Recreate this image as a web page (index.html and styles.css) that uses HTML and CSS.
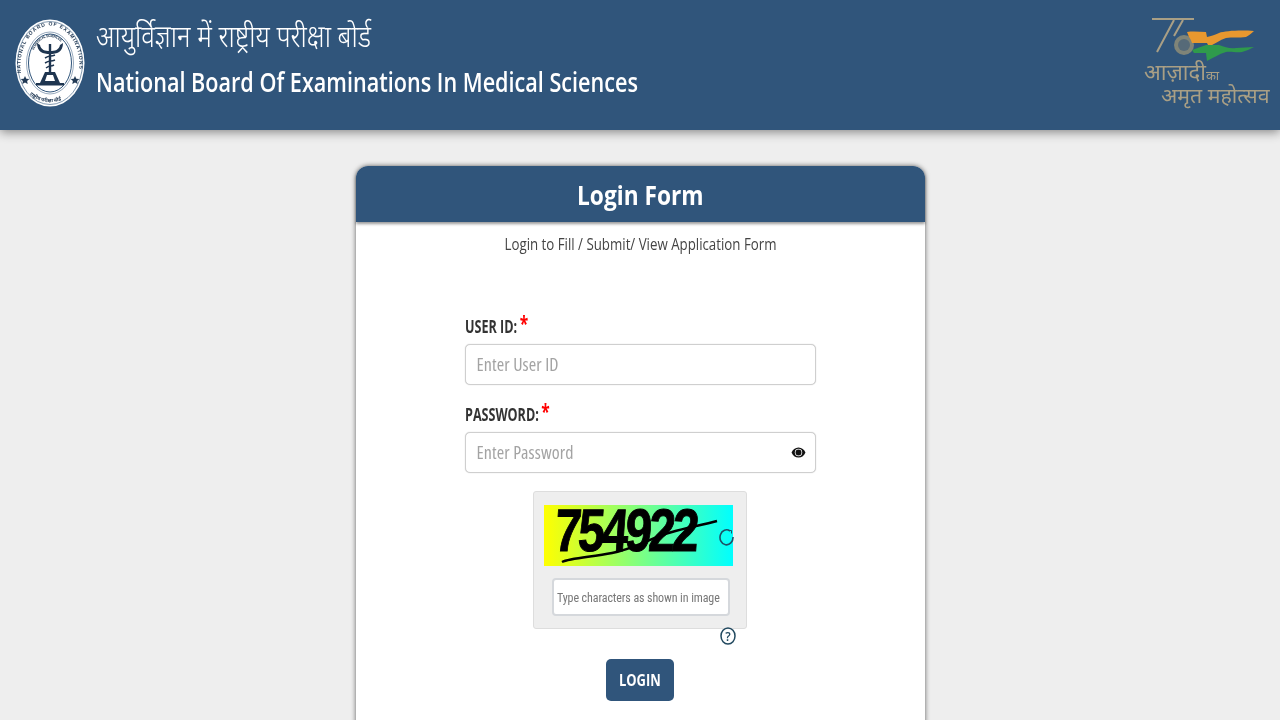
FILE: index.html
```html
<!DOCTYPE html>
<html lang="en">
<head>
<meta charset="utf-8">
<title>Login Form</title>
<link rel="stylesheet" href="styles.css">
</head>
<body>
<header class="topbar">
  <div class="brand">
    <svg class="seal" viewBox="0 0 70 90" width="70" height="90" aria-hidden="true">
      <defs>
        <path id="sealArc" d="M6 56 A29.500 40 0 1 1 64 56"/>
        <path id="sealSub" d="M19 33 A18 24 0 0 1 51 33"/>
        <path id="sealLow" d="M14 77 A28 24 0 0 0 56 77"/>
      </defs>
      <ellipse cx="35" cy="46" rx="34.500" ry="43.500" fill="#fff"/>
      <ellipse cx="35" cy="46" rx="32.500" ry="41.500" fill="none" stroke="#30557b" stroke-width=".6"/>
      <ellipse cx="35" cy="46" rx="21.500" ry="29" fill="none" stroke="#30557b" stroke-width="1"/>
      <ellipse cx="35" cy="46" rx="23.500" ry="31" fill="none" stroke="#30557b" stroke-width=".5"/>
      <text class="seal-text"><textPath href="#sealArc" textLength="120">NATIONAL BOARD OF EXAMINATIONS</textPath></text>
      <text class="seal-sub"><textPath href="#sealSub" textLength="34">IN MEDICAL SCIENCES</textPath></text>
      <text class="seal-hi"><textPath href="#sealLow" startOffset="1">राष्ट्रीय परीक्षा बोर्ड</textPath></text>
      <path d="M10 59l1.300 2.700 3 .4-2.200 2 .6 3-2.700-1.500-2.700 1.500.6-3-2.200-2 3-.4z M60 59l1.300 2.700 3 .4-2.200 2 .6 3-2.700-1.500-2.700 1.500.6-3-2.200-2 3-.4z" fill="#223a55"/>
      <path d="M22 26c0 9 6 11 13 11s13-2 13-11l-3 2c-1 5-5 6-10 6s-9-1-10-6z" fill="#1e3550"/>
      <path d="M33.800 27h2.400v30h-2.400z" fill="#1e3550"/>
      <path d="M30 41c5-3 5-1 10-3M30 46c5-3 5-1 10-3M31 51c4-3 4-1 8-3" stroke="#1e3550" stroke-width="1.500" fill="none"/>
      <path d="M25 66l5-11h10l5 11z" fill="#1e3550"/>
      <path d="M32 58h6l2 6h-10z" fill="#fff"/>
      <path d="M21 66h28v2.500H21z" fill="#1e3550"/>
    </svg>
    <div class="brand-text">
      <div class="title-hi">आयुर्विज्ञान में राष्ट्रीय परीक्षा बोर्ड</div>
      <div class="title-en">National Board Of Examinations In Medical Sciences</div>
    </div>
  </div>
  <div class="azadi">
    <svg class="azadi-mark" viewBox="0 0 112 46" width="112" height="46" aria-hidden="true">
      <path d="M8 3h42" stroke="#a99f85" stroke-width="2" fill="none"/>
      <path d="M30 4 13 36 M39 4 30 20" stroke="#a99f85" stroke-width="2" fill="none"/>
      <circle cx="40" cy="29" r="10" fill="#7f8478"/>
      <circle cx="40" cy="29" r="6" fill="#566a78"/>
      <path d="M43 16C50 15 56 16 62 16L63 21C69 20 72 18 75 17 81 15 95 14 110 15 107 18 104 20 102 21 95 22 88 21 82 22 76 24 70 28 65 31L63 27 48 27C47 24 46 22 45 21z" fill="#e8982f"/>
      <path d="M48 34 62 29 75 29C81 31 86 33 92 32 98 32 104 31 110 31 106 33 102 35 98 36 92 37 87 35 82 36 75 38 69 42 63 45L62 37 50 37z" fill="#2f9a4c"/>
    </svg>
    <div class="azadi-line one">आज़ादी<span class="azadi-small">का</span></div>
    <div class="azadi-line two">अमृत महोत्सव</div>
  </div>
</header>

<main class="page">
  <section class="card">
    <h1 class="card-title"><span class="card-title-text">Login Form</span></h1>
    <p class="card-sub">Login to Fill / Submit/ View Application Form</p>
    <form class="form">
      <label class="label">USER ID: <span class="req">*</span></label>
      <div class="field"><input class="input" type="text" placeholder="Enter User ID"></div>
      <label class="label second">PASSWORD: <span class="req">*</span></label>
      <div class="field">
        <input class="input" type="password" placeholder="Enter Password">
        <svg class="eye" viewBox="0 0 16 14" width="15" height="13" aria-hidden="true">
          <path d="M8 1.500C4.500 1.500 1.700 3.800.5 7c1.200 3.200 4 5.500 7.500 5.500s6.300-2.300 7.500-5.500C14.300 3.800 11.500 1.500 8 1.500z" fill="#111"/>
          <circle cx="8" cy="7" r="4" fill="#fff"/>
          <circle cx="8" cy="7" r="3.200" fill="#111"/>
        </svg>
      </div>
      <div class="captcha-wrap">
        <div class="captcha">
          <div class="captcha-image">
            <span class="captcha-code">754922</span>
            <svg class="captcha-strike" viewBox="0 0 190 61" width="190" height="61" aria-hidden="true">
              <path d="M18 57c8-4 30-5 50-9 22-4 38-15 60-21 14-4 30-7 45-11" stroke="#000" stroke-width="2.500" fill="none"/>
            </svg>
            <svg class="captcha-reload" viewBox="0 0 16 18" width="16" height="18" aria-hidden="true">
              <path d="M11 3A6.500 7.500 0 1 0 14 9" stroke="#1f4f66" stroke-width="1.600" fill="none"/>
              <path d="M9.500 2.500 12.500 2.500 12.500 5.500" stroke="#1f4f66" stroke-width="1" fill="none"/>
            </svg>
          </div>
          <input class="captcha-input" type="text" placeholder="Type characters as shown in image">
        </div>
        <svg class="help" viewBox="0 0 16 18" width="16" height="18" aria-hidden="true">
          <ellipse cx="8" cy="9" rx="7" ry="8" fill="none" stroke="#234a60" stroke-width="1.500"/>
          <text x="8" y="13.500" class="help-text">?</text>
        </svg>
      </div>
      <div class="actions"><button class="login" type="button"><span class="login-text">LOGIN</span></button></div>
    </form>
  </section>
</main>
</body>
</html>
```
FILE: styles.css
```css
* { box-sizing: border-box; }
html, body { height: 100%; }
body {
  margin: 0;
  height: 720px;
  overflow: hidden;
  background: #eeeeee;
  font-family: "Open Sans", "Noto Sans", sans-serif;
  color: #333;
}
.topbar {
  height: 130px;
  background: #30557b;
  box-shadow: 0 2px 10px rgba(0, 0, 0, .45);
  display: flex;
  justify-content: space-between;
  align-items: flex-start;
  padding: 17px 10px 0 15px;
}
.brand { display: flex; gap: 11px; }
.seal { display: block; filter: blur(.4px); }
.seal-text { font-size: 5px; font-weight: 700; fill: #223a55; font-family: "Liberation Sans", sans-serif; }
.seal-sub { font-size: 3.500px; font-weight: 700; fill: #223a55; font-family: "Liberation Sans", sans-serif; }
.seal-hi { font-size: 5px; font-weight: 700; fill: #223a55; font-family: "Noto Sans", sans-serif; }
.brand-text { color: #fff; filter: blur(.3px); }
.title-hi {
  font-size: 31px;
  line-height: 36px;
  height: 36px;
  font-weight: 300;
  font-family: "Noto Sans", "DejaVu Sans", sans-serif;
  white-space: nowrap;
  transform: scaleX(.833);
  transform-origin: left;
}
.title-en {
  font-size: 27px;
  line-height: 36px;
  margin-top: 11px;
  font-weight: 600;
  white-space: nowrap;
  transform: scaleX(.8);
  transform-origin: left;
}
.azadi { width: 126px; margin-top: -1px; display: flex; flex-direction: column; filter: blur(.5px); }
.azadi-mark { display: block; }
.azadi-line { color: #a99f85; font-family: "Noto Sans", sans-serif; white-space: nowrap; line-height: 22px; }
.azadi-line.one { font-size: 22px; margin-top: -2px; }
.azadi-line.two { font-size: 21.300px; margin: -2px 0 0 17px; }
.azadi-small { font-size: 13px; }
.page { display: flex; justify-content: center; padding-top: 36px; }
.card {
  width: 569px;
  height: 700px;
  background: #fff;
  border-radius: 12px 12px 0 0;
  box-shadow: 0 0 5px rgba(0, 0, 0, .6);
  filter: blur(.3px);
}
.card-title {
  margin: 0;
  height: 56px;
  background: #30557b;
  color: #fff;
  border-radius: 12px 12px 0 0;
  box-shadow: 0 2px 3px rgba(0, 0, 0, .4);
  text-align: center;
  font-size: 27px;
  line-height: 58px;
  font-weight: 700;
}
.card-title-text { display: inline-block; transform: scaleX(.84); }
.card-sub { margin: 11px 0 0; text-align: center; font-size: 16px; line-height: 22px; color: #444; transform: scaleX(.83); }
.form { width: 351px; margin: 60px auto 0; }
.label {
  display: block;
  font-size: 17px;
  font-weight: 700;
  line-height: 16px;
  height: 24px;
  white-space: nowrap;
  transform: scaleX(.74);
  transform-origin: left;
}
.label.second { margin-top: 18px; }
.req { color: #f00; font-size: 21px; font-weight: 700; line-height: 16px; vertical-align: 2px; margin-left: -1px; }
.field { position: relative; margin-top: 5px; }
.input {
  width: 100%;
  height: 41px;
  border: 1px solid #cfcfcf;
  box-shadow: 0 0 1px rgba(0, 0, 0, .25);
  border-radius: 5px;
  padding: 0 11px 1px;
  font: 18px "Open Sans", sans-serif;
  font-stretch: 75%;
  letter-spacing: .1px;
  background: #fff;
}
.input::placeholder { color: #a3a3a3; }
.eye { position: absolute; right: 10px; top: 14px; }
.captcha-wrap { width: 214px; margin: 18px auto 0; position: relative; }
.captcha {
  height: 138px;
  background: #eeeeee;
  border: 1px solid #ddd;
  border-radius: 3px;
  padding: 13px 10px 0;
}
.captcha-image {
  position: relative;
  width: 189px;
  height: 61px;
  background: linear-gradient(90deg, #ffff00, #00ffff);
}
.captcha-code {
  position: absolute;
  left: 11px;
  top: -4px;
  font: 700 60px/60px "Liberation Sans", sans-serif;
  letter-spacing: -4px;
  color: #000;
  transform: scaleX(.8) skewX(-5deg);
  transform-origin: left;
  -webkit-text-stroke: 1px #000;
}
.captcha-strike { position: absolute; left: 0; top: 0; }
.captcha-reload { position: absolute; right: -2px; top: 23px; }
.captcha-input {
  display: block;
  width: 178px;
  height: 38px;
  margin: 12px 0 0 8px;
  border: 2px solid #d5d8dc;
  border-radius: 4px;
  background: #fff;
  padding: 2px 3px 0;
  font: 12px "Roboto", sans-serif;
  font-stretch: 75%;
  letter-spacing: -.1px;
}
.captcha-input::placeholder { color: #777; }
.help { position: absolute; right: 11px; top: 136px; }
.help-text { font: 600 12px "Open Sans", sans-serif; text-anchor: middle; fill: #234a60; }
.actions { display: flex; justify-content: center; margin-top: 30px; }
.login {
  width: 68px;
  height: 42px;
  border: 0;
  border-radius: 5px;
  background: #30557b;
  color: #fff;
  font: 700 16px "Open Sans", sans-serif;
}
.login-text { display: inline-block; transform: scaleX(.81); }
```
